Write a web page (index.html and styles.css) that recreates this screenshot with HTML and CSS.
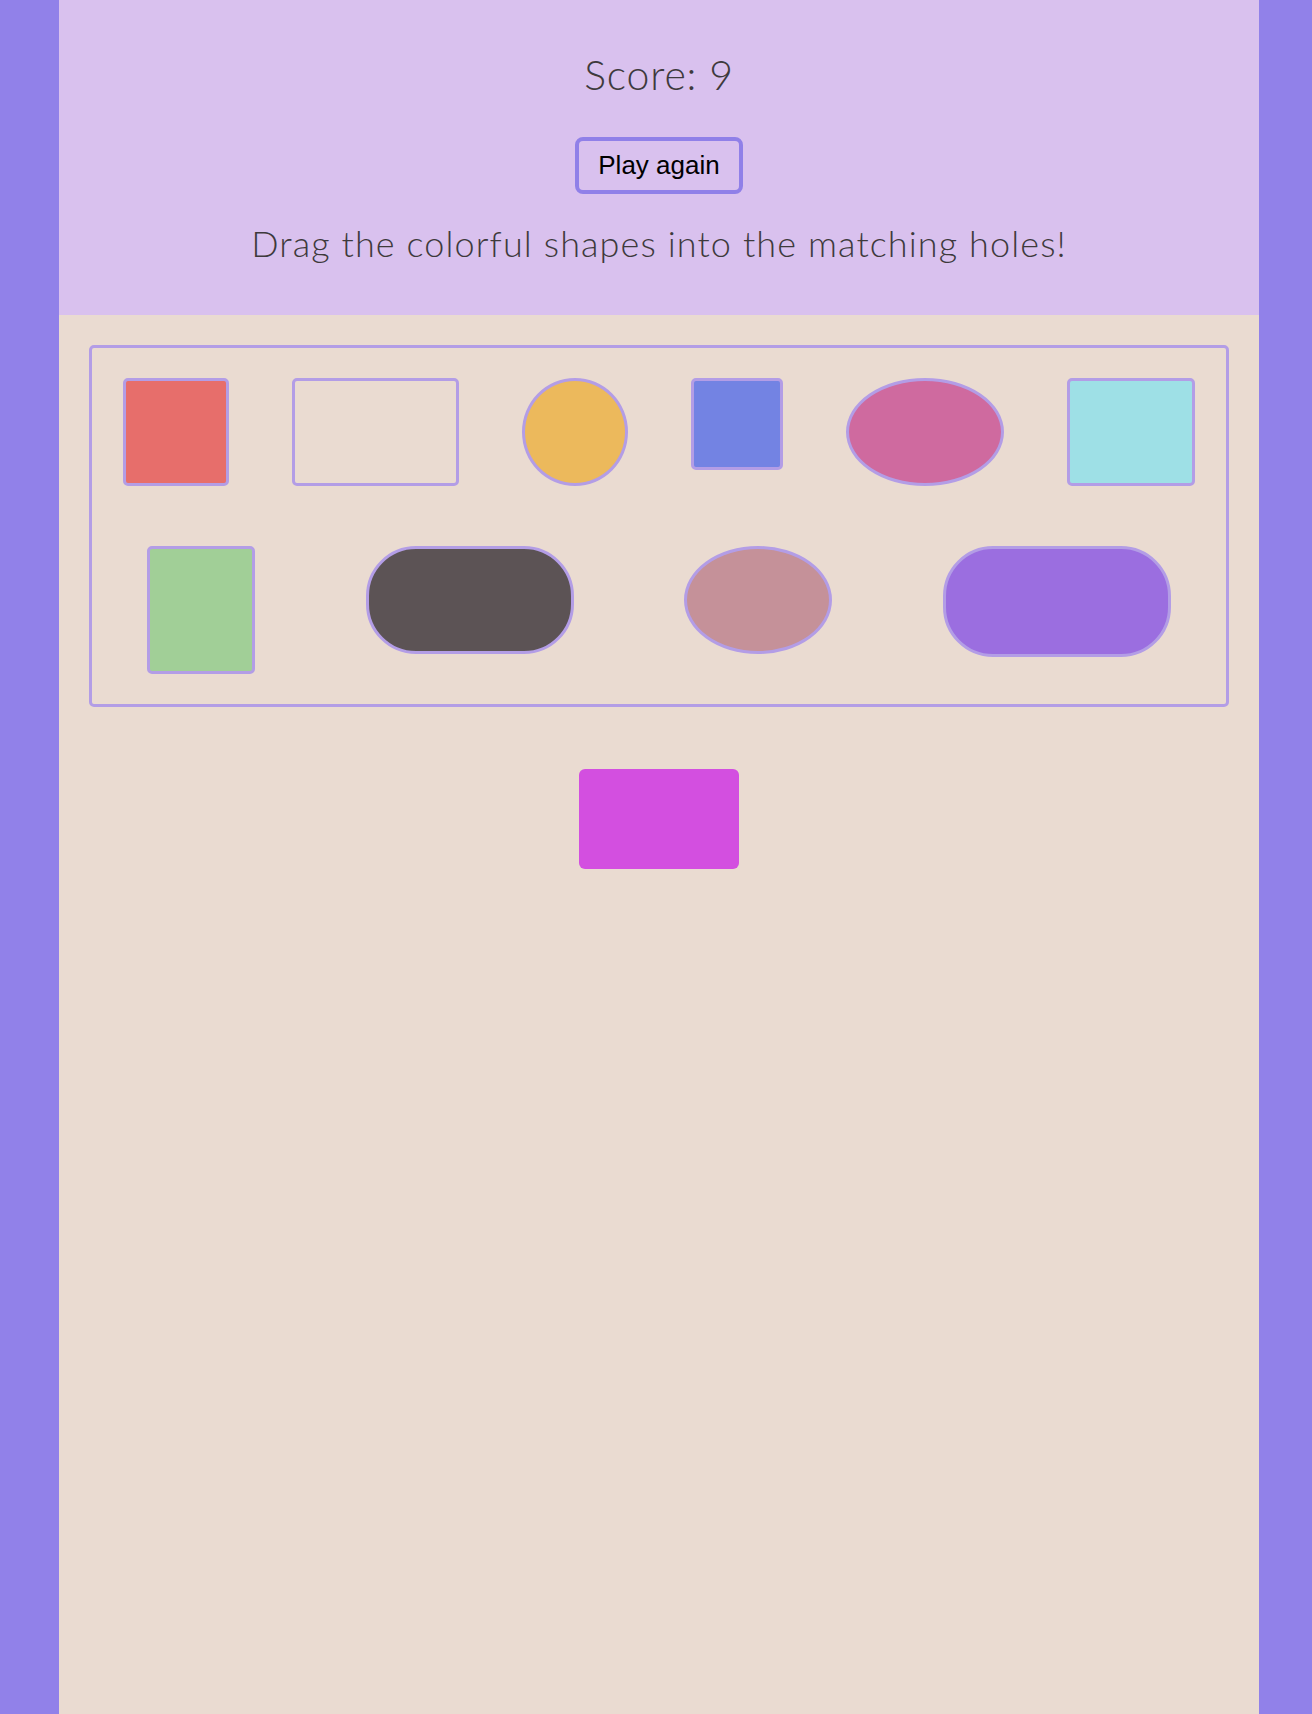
FILE: index.html
```html
<!DOCTYPE html>
<html lang="en">
  <head>
    <meta charset="UTF-8" />
    <meta name="viewport" content="width=device-width, initial-scale=1.0" />
    <title>Shape Sorter</title>
    <link rel="stylesheet" href="styles.css">
  </head>
  <body>
    <div class="game">
      <div class="top">
        <h1 class="score">Score: 9</h1>
        <button class="again">Play again</button>
        <p class="hint">Drag the colorful shapes into the matching holes!</p>
      </div>

      <div class="board">
        <div class="hole rect red"></div>
        <div class="hole rect empty"></div>
        <div class="hole round yellow"></div>
        <div class="hole rect blue"></div>
        <div class="hole round pink"></div>
        <div class="hole rect cyan"></div>
        <div class="hole rect green"></div>
        <div class="hole pill dark"></div>
        <div class="hole round mauve"></div>
        <div class="hole pill purple"></div>
      </div>

      <div class="tray">
        <div class="piece"></div>
      </div>
    </div>
  </body>
</html>
```

FILE: styles.css
```css
* {
  margin: 0;
  padding: 0;
  box-sizing: border-box;
}
body {
  background-color: #9181e9;
  height: 1714px;
  overflow: hidden;
}
/* main column */
.game {
  width: 1200px;
  min-height: 1714px;
  margin-left: 59px;
  background-color: #eadbd1;
}
/* header */
.top {
  height: 315px;
  padding-top: 52px;
  background-color: #d9c1ee;
  text-align: center;
  color: #3e3a3c;
  font-family: Lato, "Noto Sans", sans-serif;
}
.score {
  font-size: 41px;
  font-weight: 300;
  line-height: 46px;
  letter-spacing: 0.8px;
}
.again {
  margin-top: 39px;
  padding: 9px 19px;
  border: 4px solid #9080e8;
  border-radius: 8px;
  background: transparent;
  font-family: "Liberation Sans", Arial, sans-serif;
  font-size: 26px;
  line-height: 31px;
  color: #000;
  cursor: pointer;
}
.hint {
  margin-top: 29px;
  font-size: 36px;
  font-weight: 300;
  line-height: 40px;
  letter-spacing: 1.1px;
}
/* board with the holes */
.board {
  display: flex;
  flex-wrap: wrap;
  justify-content: space-around;
  align-items: flex-start;
  margin: 30px;
  border: 3px solid #b39de6;
  border-radius: 5px;
}
.hole {
  margin: 30px;
  border: 3px solid #b39de6;
}
.rect {
  border-radius: 5px;
}
.round {
  border-radius: 50%;
}
.pill {
  border-radius: 50px;
}
.red { width: 106px; height: 108px; background-color: #e76e6b; }
.empty { width: 167px; height: 108px; }
.yellow { width: 106px; height: 108px; background-color: #ecb95c; }
.blue { width: 92px; height: 92px; background-color: #7383e3; }
.pink { width: 158px; height: 108px; background-color: #cf6a9f; }
.cyan { width: 128px; height: 108px; background-color: #9ee0e6; }
.green { width: 108px; height: 128px; background-color: #a1cf97; }
.dark { width: 208px; height: 108px; background-color: #5c5355; }
.mauve { width: 148px; height: 108px; background-color: #c59199; }
.purple { width: 228px; height: 111px; background-color: #9b6ee0; }
/* loose piece */
.tray {
  display: flex;
  justify-content: center;
  padding-top: 32px;
}
.piece {
  width: 160px;
  height: 100px;
  border-radius: 6px;
  background-color: #d34fe0;
}
```
